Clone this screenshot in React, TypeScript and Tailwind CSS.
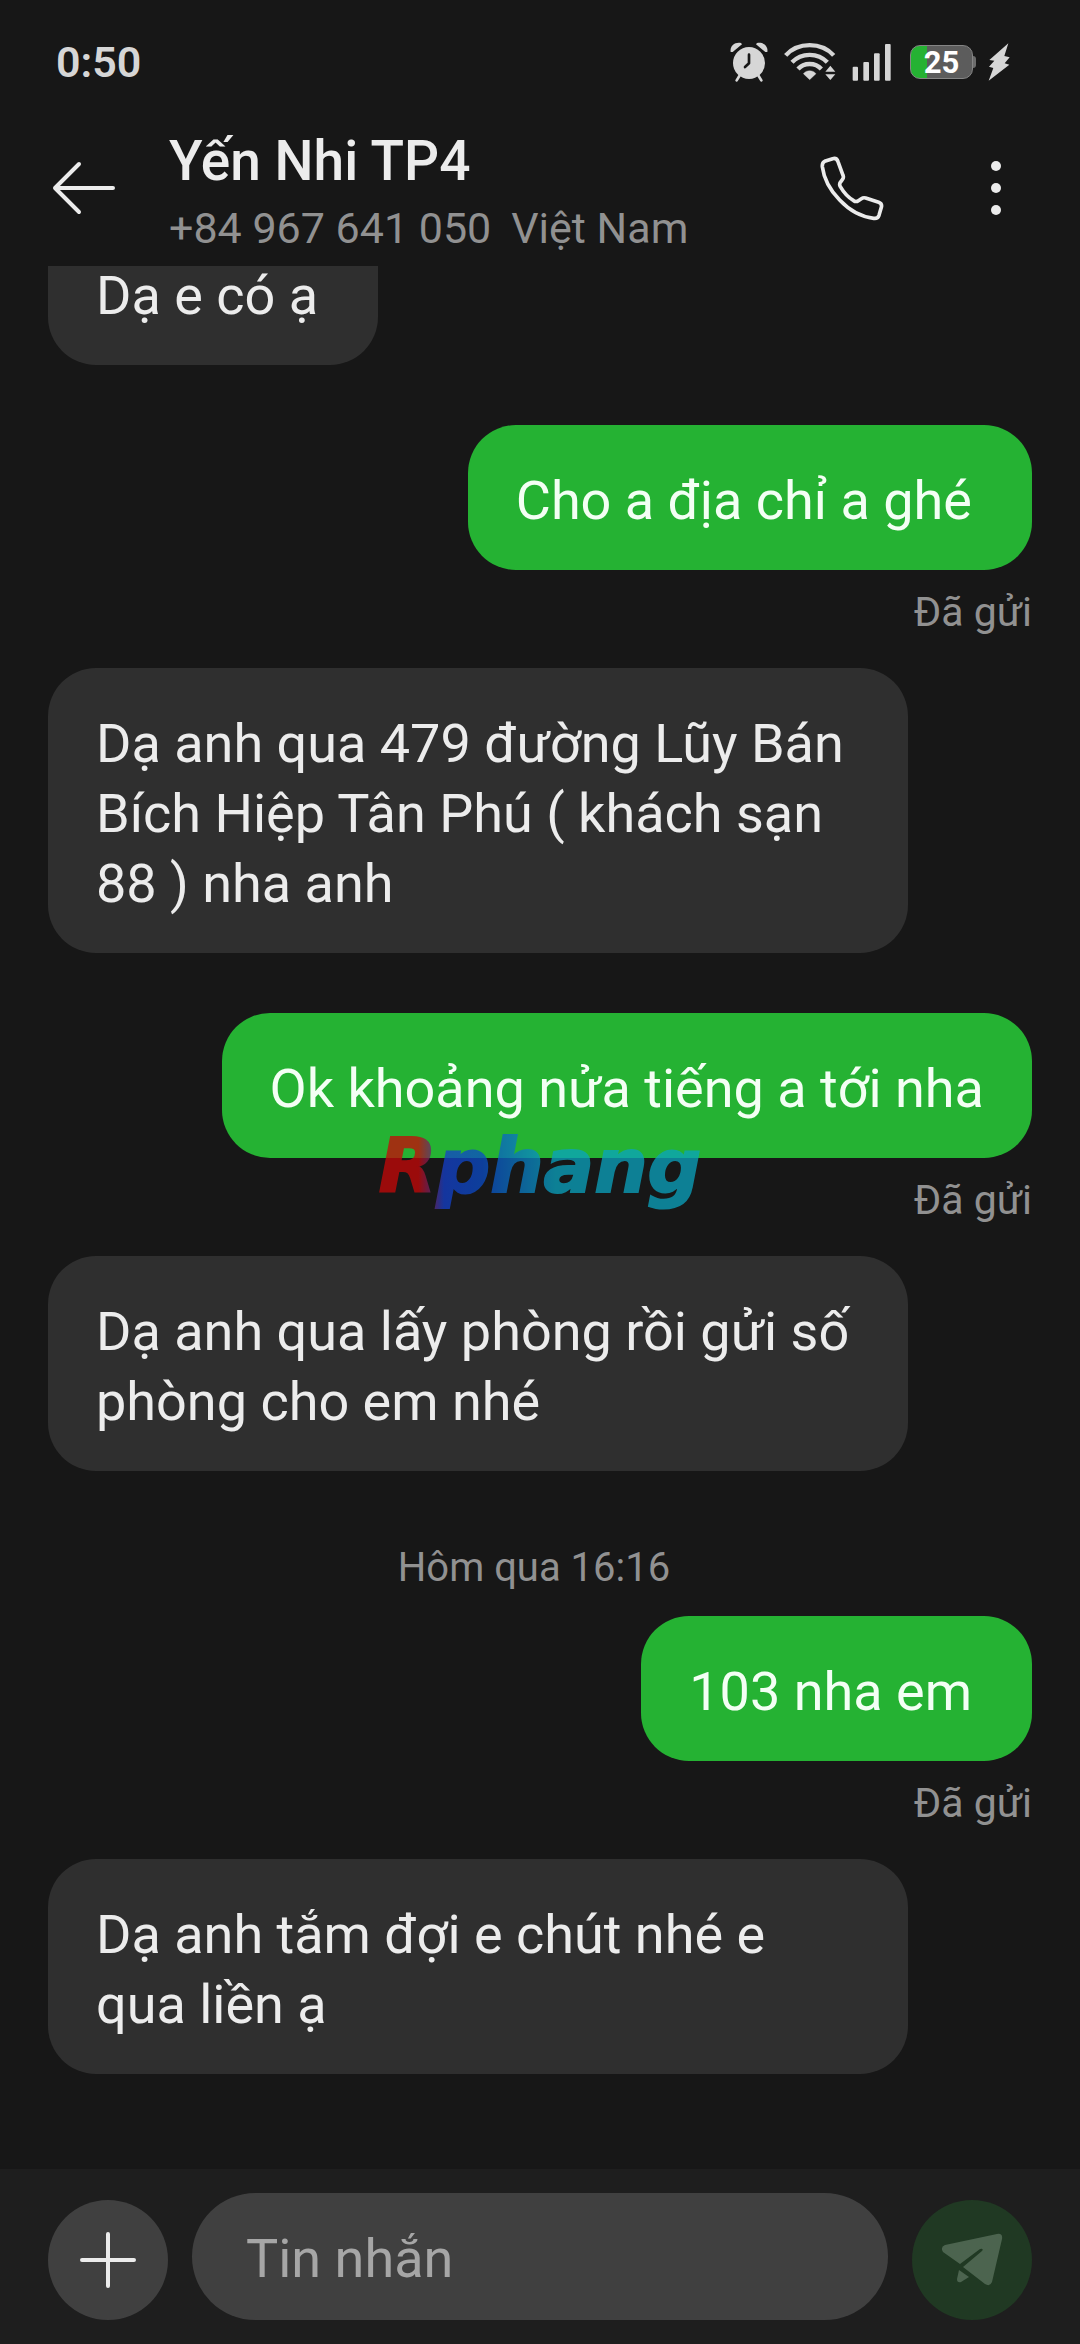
import React from 'react';
import clsx from 'clsx';

type Message = {
  id: number;
  from: 'me' | 'them';
  text: string;
  day?: string;
  scrolled?: boolean;
  short?: boolean;
};

const messages: Message[] = [
  { id: 1, from: 'them', text: 'Dạ e có ạ', scrolled: true, short: true },
  { id: 2, from: 'me', text: 'Cho a địa chỉ a ghé', short: true },
  { id: 3, from: 'them', text: 'Dạ anh qua 479 đường Lũy Bán Bích Hiệp Tân Phú ( khách sạn 88 ) nha anh' },
  { id: 4, from: 'me', text: 'Ok khoảng nửa tiếng a tới nha' },
  { id: 5, from: 'them', text: 'Dạ anh qua lấy phòng rồi gửi số phòng cho em nhé' },
  { id: 6, from: 'me', text: '103 nha em', day: 'Hôm qua 16:16', short: true },
  { id: 7, from: 'them', text: 'Dạ anh tắm đợi e chút nhé e qua liền ạ' }
];

const StatusBar: React.FC = () => (
  <div className="flex h-[124px] items-center justify-between pl-14 pr-[70px] text-[#d6d6d6]">
    <span className="text-[43px] leading-none font-semibold">0:50</span>
    <div className="flex items-center">
      <svg width="38" height="40" viewBox="0 0 114 120" fill="currentColor" aria-hidden="true">
        <path d="M2 30C-1 12 14 -1 33 3L36 7L8 30Z" />
        <path d="M112 30C115 12 100 -1 81 3L78 7L106 30Z" />
        <path d="M28 102L20 115M86 102L94 115" stroke="currentColor" strokeWidth="8" strokeLinecap="round" />
        <circle cx="57" cy="63" r="48" />
        <path d="M57 38V64L45 75" fill="none" stroke="#171717" strokeWidth="8" strokeLinecap="round" strokeLinejoin="round" />
      </svg>
      <svg className="ml-4" width="52" height="40" viewBox="0 0 156 120" fill="none" stroke="currentColor" strokeWidth="13" aria-hidden="true">
        <path d="M5 40C42 -1 112 -1 149 40" />
        <path d="M24 61C52 31 102 31 130 61" />
        <path d="M42 81C60 61 94 61 112 81" />
        <path d="M77 113L58 95C67 83 87 83 96 95Z" fill="currentColor" strokeWidth="1" />
        <path d="M139 71L154 89H124ZM139 114L154 97H124Z" fill="currentColor" stroke="none" />
      </svg>
      <svg className="ml-4" width="40" height="38" viewBox="0 0 120 114" fill="currentColor" aria-hidden="true">
        <rect x="2" y="71" width="16" height="42" rx="3" />
        <rect x="34" y="57" width="17" height="56" rx="3" />
        <rect x="66" y="31" width="17" height="82" rx="3" />
        <rect x="99" y="3" width="17" height="110" rx="3" />
      </svg>
      <div className="ml-[18px] flex items-center">
        <div className="flex h-[34px] w-[63px] items-center justify-center rounded-[10px] border border-[#858585] bg-linear-to-r from-[#25b233] from-27% to-[#5c5c5c] to-27%">
          <span className="text-[31px] leading-none font-bold text-white">25</span>
        </div>
        <div className="h-3 w-[3px] rounded-r-sm bg-[#6c6c6c]" />
      </div>
      <svg className="ml-3" width="22" height="38" viewBox="0 0 66 114" fill="currentColor" aria-hidden="true">
        <path d="M61 1L4 51L19 53L3 71L16 75L2 113L64 65L50 61L65 43L49 39Z" />
      </svg>
    </div>
  </div>
);

const ChatHeader: React.FC = () => (
  <header className="flex h-[142px] items-start pr-14 pl-[52px] text-[#ececec]">
    <button type="button" aria-label="Quay lại" className="mt-9">
      <svg width="64" height="56" viewBox="0 0 64 56" fill="none" stroke="currentColor" strokeWidth="4" strokeLinecap="round" strokeLinejoin="round">
        <path d="M61 28H3M27 4L3 28L27 52" />
      </svg>
    </button>
    <div className="ml-[53px] flex-1">
      <h1 className="text-[55px] leading-[74px] font-medium">Yến Nhi TP4</h1>
      <p className="text-[43px] leading-[60px] text-[#919191]">
        <span>+84 967 641 050</span>
        <span className="ml-5">Việt Nam</span>
      </p>
    </div>
    <button type="button" aria-label="Gọi" className="mt-8">
      <svg width="64" height="66" viewBox="0 0 192 198" fill="none" stroke="currentColor" strokeWidth="11" strokeLinejoin="round">
        <path d="M14 16L38 8Q50 5 54 17L69 58Q72 65 67 71L61 79Q57 85 61 92Q77 120 101 134Q108 139 115 134L124 128Q130 124 137 126L176 139Q187 143 184 154L177 178Q173 189 161 187Q104 180 59 132Q14 86 7 32Q6 20 14 16Z" />
      </svg>
    </button>
    <button type="button" aria-label="Thêm tùy chọn" className="ml-[92px] mt-9">
      <svg width="48" height="56" viewBox="0 0 48 56" fill="currentColor">
        <circle cx="20" cy="6" r="5" />
        <circle cx="20" cy="28" r="5" />
        <circle cx="20" cy="50" r="5" />
      </svg>
    </button>
  </header>
);

const Bubble: React.FC<{ message: Message }> = ({ message }) => {
  const mine = message.from === 'me';
  return (
    <li className={clsx('flex flex-col', mine ? 'items-end' : 'items-start')}>
      {message.day && (
        <time className="mb-3 self-center pr-3 text-[40px] leading-[73px] text-[#919191]">{message.day}</time>
      )}
      <p
        className={clsx(
          'max-w-[860px] pl-12 text-[54px]',
          mine ? 'bg-[#25b233] text-[#f3fff4]' : 'bg-[#2f2f2f] text-[#ececec]',
          message.short ? 'pr-15' : 'pr-12',
          // the oldest visible message is half under the header
          message.scrolled ? 'rounded-b-[48px] pb-[39px] leading-[60px]' : 'rounded-[48px] pt-[41px] pb-[34px] leading-[70px]'
        )}
      >
        {message.text}
      </p>
      {mine && <span className="mt-3 -mb-[34px] text-[41px] leading-[60px] text-[#919191]">Đã gửi</span>}
    </li>
  );
};

const Composer: React.FC = () => (
  <form className="flex items-end gap-6 bg-[#1e1e1e] px-12 py-6" onSubmit={(e) => e.preventDefault()}>
    <button type="button" aria-label="Đính kèm" className="flex size-30 shrink-0 items-center justify-center rounded-full bg-[#404040]">
      <svg width="58" height="58" viewBox="0 0 58 58" stroke="#ececec" strokeWidth="4" strokeLinecap="round">
        <path d="M29 3V55M3 29H55" />
      </svg>
    </button>
    <input
      type="text"
      aria-label="Tin nhắn"
      placeholder="Tin nhắn"
      className="h-[127px] min-w-0 flex-1 rounded-full bg-[#404040] px-[54px] pt-1 text-[54px] text-[#ececec] outline-none placeholder:text-[#a6a6a6]"
    />
    <button type="submit" aria-label="Gửi" className="flex size-30 shrink-0 items-center justify-center rounded-full bg-[#203923]">
      <svg width="62" height="54" viewBox="0 0 62 54" fill="#4c644f">
        <path d="M4 12L56 1Q62 0 61 6L51 49Q49 54 44 51L22 34L41 18Q43 15 39 16L19 31L2 19Q-1 14 4 12Z" />
        <path d="M18 37L28 44L20 49Q16 50 16 46Z" />
      </svg>
    </button>
  </form>
);

const Watermark: React.FC = () => (
  <svg
    className="pointer-events-none absolute top-[1120px] left-1/2 -translate-x-1/2 font-['DejaVu_Sans',sans-serif] text-[75px] font-bold italic opacity-75"
    width="340"
    height="100"
    viewBox="0 0 340 100"
  >
    <defs>
      <linearGradient id="brand" gradientUnits="userSpaceOnUse" x1="10" y1="0" x2="330" y2="0">
        <stop offset="0.12" stopColor="#c80808" />
        <stop offset="0.2" stopColor="#1440cc" />
        <stop offset="0.32" stopColor="#0a4cc8" />
        <stop offset="0.55" stopColor="#0aa4c0" />
      </linearGradient>
    </defs>
    <text x="170" y="72" textAnchor="middle" fill="url(#brand)" stroke="url(#brand)" strokeWidth="2">
      Rphang
    </text>
  </svg>
);

export default function App() {
  return (
    <div className="relative flex min-h-screen flex-col bg-[#171717] font-[Roboto,sans-serif]">
      <StatusBar />
      <ChatHeader />
      <main className="flex-1 px-12 pb-[94px]">
        <ul className="flex flex-col gap-[60px]">
          {messages.map((message) => (
            <Bubble key={message.id} message={message} />
          ))}
        </ul>
      </main>
      <Composer />
      <Watermark />
    </div>
  );
}
